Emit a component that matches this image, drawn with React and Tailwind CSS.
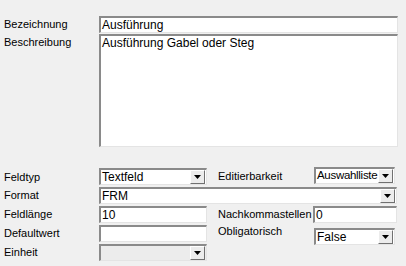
import React from "react";

const font = { fontFamily: '"Liberation Sans", Arial, sans-serif' };

function Arrow() {
  return (
    <div className="flex h-[14px] w-[15px] items-center justify-center border border-t-white border-l-white border-r-[#707070] border-b-[#707070] bg-[#ececec]">
      <svg width="7" height="4" viewBox="0 0 7 4"><path d="M0 0h7L3.5 4z" fill="#000" /></svg>
    </div>
  );
}

function Input({ value, w, combo, disabled, tight }) {
  return (
    <div
      className={`flex h-[17px] items-center border-t-2 border-l-2 border-t-[#8a8a8a] border-l-[#8a8a8a] border-r border-b border-r-[#e4e4e4] border-b-[#e4e4e4] ${disabled ? "bg-[#ececec]" : "bg-white"} ${w}`}
    >
      <span className={`flex-1 whitespace-nowrap pl-[1px] leading-none text-black ${tight ? "text-[11.5px] tracking-[-0.3px]" : "text-[12px]"}`}>{value}</span>
      {combo && <div className="pr-[1px]"><Arrow /></div>}
    </div>
  );
}

function Label({ children, w = "w-[95px]" }) {
  return <div className={`${w} whitespace-nowrap text-[11px] leading-none text-black`}>{children}</div>;
}

export default function App() {
  return (
    <div className="h-[266px] w-[406px] bg-[#f0f0f0] pl-[4px] pt-[16px]" style={font}>
      <div className="flex items-start">
        <div className="pt-[3px]"><Label>Bezeichnung</Label></div>
        <Input value="Ausführung" w="w-[299px]" />
      </div>
      <div className="mt-[1px] flex items-start">
        <div className="pt-[3px]"><Label>Beschreibung</Label></div>
        <div className="h-[113px] w-[299px] border-t-2 border-l-2 border-t-[#8a8a8a] border-l-[#8a8a8a] border-r border-b border-r-[#e4e4e4] border-b-[#e4e4e4] bg-white pl-[1px] pt-[1px] text-[12px] leading-none text-black">
          Ausführung Gabel oder Steg
        </div>
      </div>

      <div className="mt-[21px] flex flex-col gap-[2px]">
        <div className="flex h-[17px] items-start">
          <div className="pt-[4px]"><Label>Feldtyp</Label></div>
          <Input value="Textfeld" w="w-[108px]" combo />
          <div className="ml-[11px] pt-[3px]"><Label w="w-[96px]">Editierbarkeit</Label></div>
          <div className="-mt-[1px]"><Input value="Auswahlliste" w="w-[81px]" combo tight /></div>
        </div>
        <div className="flex h-[17px] items-start">
          <div className="pt-[3px]"><Label>Format</Label></div>
          <Input value="FRM" w="w-[298px]" combo />
        </div>
        <div className="flex h-[17px] items-start">
          <div className="pt-[3px]"><Label>Feldlänge</Label></div>
          <Input value="10" w="w-[108px]" />
          <div className="ml-[11px] pt-[3px]"><Label w="w-[95px]">Nachkommastellen</Label></div>
          <Input value="0" w="w-[84px]" />
        </div>
        <div className="flex h-[17px] items-start">
          <div className="pt-[3px]"><Label>Defaultwert</Label></div>
          <Input value="" w="w-[108px]" />
          <div className="ml-[11px] pt-[1px]"><Label w="w-[96px]">Obligatorisch</Label></div>
          <div className="mt-[3px]"><Input value="False" w="w-[81px]" combo /></div>
        </div>
        <div className="flex h-[17px] items-start">
          <div className="pt-[3px]"><Label>Einheit</Label></div>
          <Input value="" w="w-[108px]" combo disabled />
        </div>
      </div>
    </div>
  );
}
